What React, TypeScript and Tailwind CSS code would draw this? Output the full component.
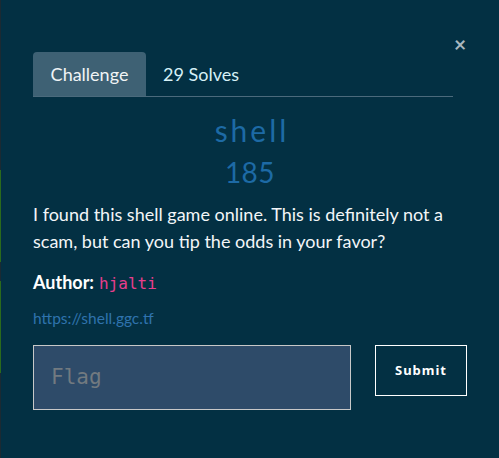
import React from "react";

export default function App() {
  return (
    <div className="relative w-[499px] h-[458px] bg-[#033043] overflow-hidden" style={{ fontFamily: "Lato, 'Open Sans', sans-serif" }}>
      {/* left edge strip of background page */}
      <div className="absolute left-0 top-0 w-[1px] h-full bg-[#1b2a33]">
        <div className="absolute left-0 top-[170px] w-[1px] h-[92px] bg-[#2b6a1c]" />
        <div className="absolute left-0 top-[281px] w-[1px] h-[92px] bg-[#2b6a1c]" />
      </div>
      <button className="absolute left-[454px] top-[33px] text-[21px] leading-none font-bold text-[#a9b8c0]">×</button>
      <div className="pl-[33px] pr-[32px] pt-[52px]">
        <div className="flex w-[420px] border-b border-[#4b6a7c] h-[45px]">
          <div className="w-[113px] bg-[#3e6174] rounded-t-[4px] flex items-center justify-center text-[18px] text-[#f0f4f6]">Challenge</div>
          <div className="px-[17px] flex items-center text-[18px] text-[#d6f1f7]">29 Solves</div>
        </div>
        <div className="text-center mt-[15px] text-[30px] leading-[36px] font-normal text-[#1d6aa5] tracking-[3px] pl-[4px]">shell</div>
        <div className="text-center mt-[8px] text-[28px] leading-[32px] font-normal text-[#1d6aa5] tracking-[0.5px]">185</div>
        <p className="mt-[13px] text-[18px] leading-[27px] text-[#f3f6f8] w-[434px]">
          I found this shell game online. This is definitely not a scam, but can you tip the odds in your favor?
        </p>
        <div className="mt-[14px] flex items-baseline text-[18px] leading-[27px]">
          <span className="font-bold text-white">Author:</span>
          <span className="ml-[5px] text-[16px] text-[#e83e8c]" style={{ fontFamily: "'DejaVu Sans Mono', monospace" }}>hjalti</span>
        </div>
        <div className="mt-[10px] text-[15.5px] leading-[22px] text-[#2f73ad]">https://shell.ggc.tf</div>
        <div className="mt-[16px] flex items-start">
          <div className="w-[318px] h-[65px] bg-[#2e4b69] border border-[#c8c8c8] flex items-center pl-[17px]">
            <span className="text-[21px] text-[#727a80]" style={{ fontFamily: "'DejaVu Sans Mono', monospace" }}>Flag</span>
          </div>
          <button className="ml-[24px] w-[92px] h-[51px] border border-white text-white text-[13px] font-bold tracking-[1px]" style={{ fontFamily: "'Noto Sans', sans-serif" }}>Submit</button>
        </div>
      </div>
    </div>
  );
}
